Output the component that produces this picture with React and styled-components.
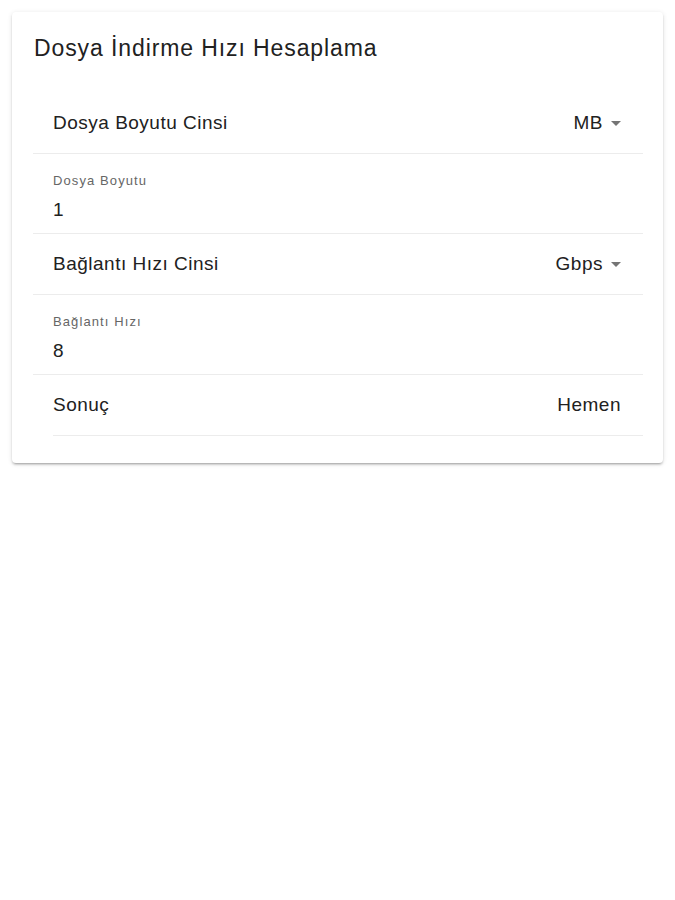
import styled, { createGlobalStyle } from 'styled-components';

const GlobalStyle = createGlobalStyle`
  body {
    margin: 0;
    background: #ffffff;
    font-family: 'Liberation Sans', Arial, sans-serif;
    color: #212121;
  }
`;

const Page = styled.div`
  padding: 12px;
`;

const Card = styled.div`
  background: #ffffff;
  border-radius: 4px;
  box-shadow: 0 2px 2px rgba(0, 0, 0, 0.14), 0 3px 1px -2px rgba(0, 0, 0, 0.12),
    0 1px 5px rgba(0, 0, 0, 0.12);
  padding: 22px 20px 27px 21px;
`;

const Title = styled.h1`
  margin: 0 0 31px 1px;
  font-size: 23px;
  font-weight: 400;
  letter-spacing: 0.9px;
  line-height: 28px;
  color: #212121;
`;

const List = styled.div`
  display: flex;
  flex-direction: column;
`;

const Row = styled.div`
  display: flex;
  align-items: center;
  justify-content: space-between;
  height: 60px;
  padding: 0 22px 0 20px;
  margin-left: ${(p) => (p.$inset ? '20px' : '0')};
  padding-left: ${(p) => (p.$inset ? '0' : '20px')};
  border-bottom: 1px solid #ececec;
  font-size: 19px;
  letter-spacing: 0.5px;
  color: #212121;
`;

const Value = styled.div`
  display: flex;
  align-items: center;
  gap: 8px;
`;

const Arrow = styled.span`
  width: 0;
  height: 0;
  border-left: 5px solid transparent;
  border-right: 5px solid transparent;
  border-top: 5px solid #757575;
`;

const Field = styled.div`
  display: flex;
  flex-direction: column;
  height: 80px;
  padding: 0 20px;
  box-sizing: border-box;
  padding-top: 20px;
  border-bottom: 1px solid #ececec;
`;

const FieldLabel = styled.div`
  font-size: 13px;
  letter-spacing: 1.1px;
  color: #666666;
  line-height: 14px;
`;

const FieldValue = styled.div`
  margin-top: 12px;
  font-size: 19px;
  line-height: 20px;
  color: #212121;
`;

function Select({ label, value }) {
  return (
    <Row>
      <span>{label}</span>
      <Value>
        {value}
        <Arrow />
      </Value>
    </Row>
  );
}

export default function App() {
  return (
    <>
      <GlobalStyle />
      <Page>
        <Card>
          <Title>Dosya İndirme Hızı Hesaplama</Title>
          <List>
            <Select label="Dosya Boyutu Cinsi" value="MB" />
            <Field>
              <FieldLabel>Dosya Boyutu</FieldLabel>
              <FieldValue>1</FieldValue>
            </Field>
            <Select label="Bağlantı Hızı Cinsi" value="Gbps" />
            <Field>
              <FieldLabel>Bağlantı Hızı</FieldLabel>
              <FieldValue>8</FieldValue>
            </Field>
            <Row $inset>
              <span>Sonuç</span>
              <span>Hemen</span>
            </Row>
          </List>
        </Card>
      </Page>
    </>
  );
}
